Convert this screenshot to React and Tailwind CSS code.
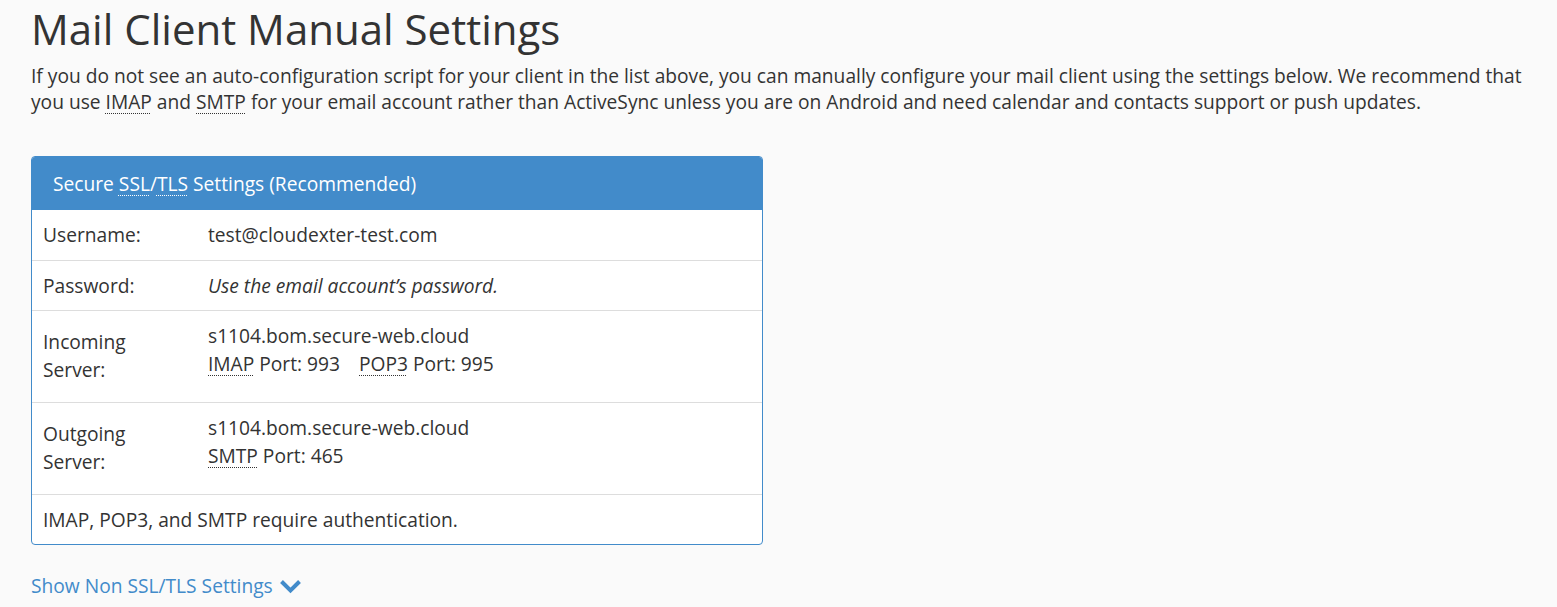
const Abbr = ({ children, title }) => (
  <abbr title={title} className="no-underline underline decoration-dotted decoration-1 underline-offset-[4px] decoration-current">
    {children}
  </abbr>
);

const Row = ({ label, children, tall }) => (
  <div className={`flex border-t border-[#dddddd] ${tall ? "min-h-[92px]" : "py-[10.5px]"}`}>
    <div className={`w-[176px] shrink-0 pl-[11px] ${tall ? "self-center -mt-[2px]" : ""}`}>{label}</div>
    <div className={tall ? "pt-[11px] pb-[22px]" : ""}>{children}</div>
  </div>
);

export default function App() {
  return (
    <div className="min-h-screen bg-[#fafafa] text-[#333333] font-['Open_Sans',sans-serif] px-[31px] pt-[2px]">
      <h1 className="text-[42px] leading-[54px] font-normal">Mail Client Manual Settings</h1>
      <p className="text-[19.2px] leading-[26px] mt-[7px]">
        If you do not see an auto-configuration script for your client in the list above, you can manually configure your mail client using the settings below. We recommend that you use{" "}
        <Abbr title="Internet Message Access Protocol">IMAP</Abbr> and <Abbr title="Simple Mail Transfer Protocol">SMTP</Abbr> for your email account rather than ActiveSync unless you are on Android and need calendar and contacts support or push updates.
      </p>

      <div className="mt-[41px] w-[732px] bg-white border border-[#428bca] rounded-[4px] overflow-hidden text-[19.2px] leading-[28px]">
        <div className="bg-[#428bca] text-white h-[53px] flex items-center px-[21px]">
          <span>
            Secure <Abbr title="Secure Sockets Layer">SSL</Abbr>/<Abbr title="Transport Layer Security">TLS</Abbr> Settings (Recommended)
          </span>
        </div>
        <div className="flex py-[11px]">
          <div className="w-[176px] shrink-0 pl-[11px]">Username:</div>
          <div>test@cloudexter-test.com</div>
        </div>
        <Row label="Password:">
          <span className="italic">Use the email account’s password.</span>
        </Row>
        <Row label={<>Incoming<br />Server:</>} tall>
          <div>s1104.bom.secure-web.cloud</div>
          <div>
            <Abbr title="Internet Message Access Protocol">IMAP</Abbr> Port: 993
            <span className="ml-[19px]">
              <Abbr title="Post Office Protocol 3">POP3</Abbr> Port: 995
            </span>
          </div>
        </Row>
        <Row label={<>Outgoing<br />Server:</>} tall>
          <div>s1104.bom.secure-web.cloud</div>
          <div>
            <Abbr title="Simple Mail Transfer Protocol">SMTP</Abbr> Port: 465
          </div>
        </Row>
        <div className="border-t border-[#dddddd] py-[10.5px] pl-[11px]">
          IMAP, POP3, and SMTP require authentication.
        </div>
      </div>

      <a href="#" className="mt-[27px] inline-flex items-center gap-[6px] text-[19.2px] leading-[28px] text-[#428bca]">
        Show Non SSL/TLS Settings
        <svg width="23" height="16" viewBox="0 0 23 16" fill="none">
          <path d="M2.5 3.5l9 9 9-9" stroke="#428bca" strokeWidth="4" strokeLinecap="butt" />
        </svg>
      </a>
    </div>
  );
}
